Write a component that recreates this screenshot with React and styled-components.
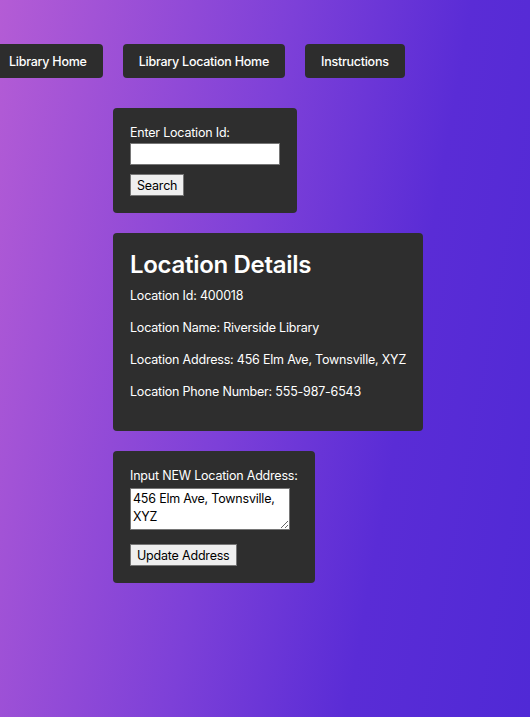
import React, { useState } from 'react';
import styled, { createGlobalStyle } from 'styled-components';

const GlobalStyle = createGlobalStyle`
  html, body {
    margin: 0;
    padding: 0;
  }
  body {
    font-family: Inter, "Noto Sans", sans-serif;
    color: #fff;
  }
`;

const Page = styled.div`
  min-height: 100vh;
  box-sizing: border-box;
  padding-top: 44px;
  background: linear-gradient(100deg, #b45cd5 0%, #7d40d8 45%, #5a2cd6 72%, #5029d6 100%);
  overflow: hidden;
`;

const Nav = styled.nav`
  display: flex;
  gap: 20px;
  margin-left: -7px;
`;

const NavButton = styled.button`
  height: 34px;
  padding: 0 16px;
  border: none;
  border-radius: 4px;
  background: #2d2d2d;
  color: #fff;
  font-family: Inter, "Noto Sans", sans-serif;
  font-size: 12.5px;
  font-weight: 500;
  letter-spacing: -0.25px;
  cursor: pointer;
`;

const Column = styled.main`
  display: flex;
  flex-direction: column;
  align-items: flex-start;
  gap: 20px;
  margin: 30px 0 0 113px;
`;

const Card = styled.section`
  background: #2e2e2e;
  border-radius: 4px;
  padding: 17px;
  font-size: 12.5px;
  letter-spacing: -0.2px;
`;

const Label = styled.label`
  display: block;
  line-height: 16px;
  margin-bottom: ${({ gap }) => gap}px;
`;

const TextInput = styled.input`
  display: block;
  box-sizing: border-box;
  width: 150px;
  height: 22px;
  margin: 0;
  border: 1px solid #767676;
  background: #fff;
`;

const TextArea = styled.textarea`
  display: block;
  box-sizing: border-box;
  width: 160px;
  height: 42px;
  margin: 0;
  padding: 1px 2px;
  border: 1px solid #767676;
  background: #fff;
  color: #000;
  font-family: Inter, "Noto Sans", sans-serif;
  font-size: 12.5px;
  letter-spacing: -0.2px;
  line-height: 18px;
`;

const FormButton = styled.button`
  display: block;
  height: 22px;
  margin-top: ${({ gap }) => gap}px;
  padding: 0 6px;
  border: 1px solid #767676;
  border-radius: 0;
  background: #efefef;
  color: #000;
  font-family: Inter, "Noto Sans", sans-serif;
  font-size: 12.5px;
  letter-spacing: -0.2px;
`;

const Heading = styled.h2`
  margin: 0 0 8px;
  font-size: 24px;
  font-weight: 600;
  letter-spacing: -0.3px;
  line-height: 30px;
`;

const Detail = styled.p`
  margin: 0 0 16px;
  line-height: 16px;

  &:last-child {
    margin-bottom: 14px;
  }
`;

export default function App() {
  const [locationId, setLocationId] = useState('');
  const [address, setAddress] = useState('456 Elm Ave, Townsville, XYZ');

  return (
    <>
      <GlobalStyle />
      <Page>
        <Nav>
          <NavButton>Library Home</NavButton>
          <NavButton>Library Location Home</NavButton>
          <NavButton>Instructions</NavButton>
        </Nav>
        <Column>
          <Card>
            <Label gap={2}>Enter Location Id:</Label>
            <TextInput value={locationId} onChange={(e) => setLocationId(e.target.value)} />
            <FormButton gap={9}>Search</FormButton>
          </Card>
          <Card>
            <Heading>Location Details</Heading>
            <Detail>Location Id: 400018</Detail>
            <Detail>Location Name: Riverside Library</Detail>
            <Detail>Location Address: 456 Elm Ave, Townsville, XYZ</Detail>
            <Detail>Location Phone Number: 555-987-6543</Detail>
          </Card>
          <Card>
            <Label gap={4}>Input NEW Location Address:</Label>
            <TextArea value={address} onChange={(e) => setAddress(e.target.value)} />
            <FormButton gap={14}>Update Address</FormButton>
          </Card>
        </Column>
      </Page>
    </>
  );
}
